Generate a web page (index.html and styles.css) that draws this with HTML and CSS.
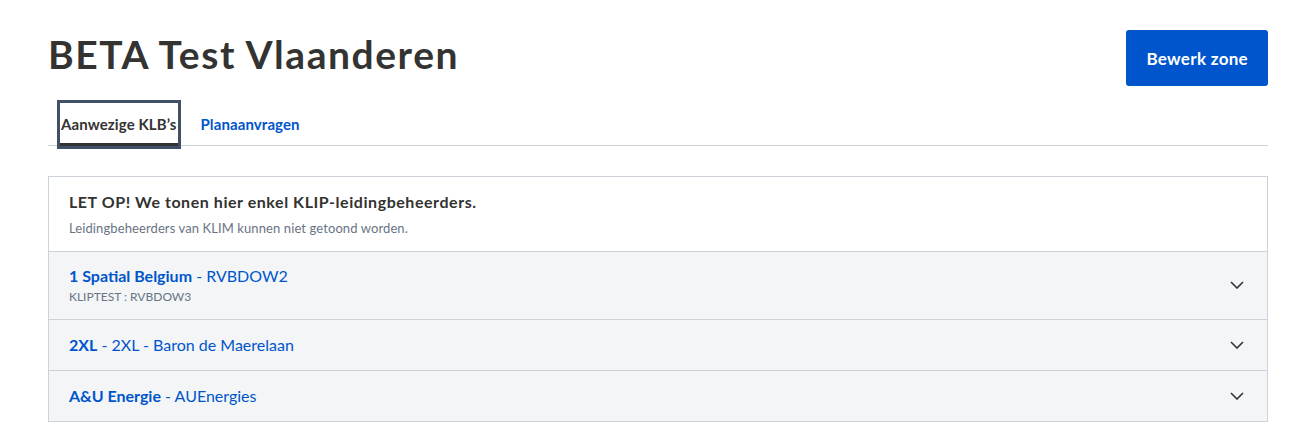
FILE: index.html
```html
<!DOCTYPE html>
<html lang="nl">
<head>
<meta charset="utf-8">
<title>BETA Test Vlaanderen</title>
<link rel="stylesheet" href="styles.css">
</head>
<body>
<div class="page">
  <header class="header">
    <h1 class="title">BETA Test Vlaanderen</h1>
    <button class="btn">Bewerk zone</button>
  </header>
  <nav class="tabs">
    <a class="tab tab-active">Aanwezige KLB’s</a>
    <a class="tab">Planaanvragen</a>
  </nav>
  <section class="card">
    <div class="notice">
      <p class="notice-title">LET OP! We tonen hier enkel KLIP-leidingbeheerders.</p>
      <p class="notice-sub">Leidingbeheerders van KLIM kunnen niet getoond worden.</p>
    </div>
    <div class="row row-multi">
      <div class="row-text">
        <div class="row-title"><strong>1 Spatial Belgium</strong> - RVBDOW2</div>
        <div class="row-sub">KLIPTEST : RVBDOW3</div>
      </div>
      <svg class="chev" width="14" height="8" viewBox="0 0 14 8"><path d="M1 1l6 6 6-6" fill="none" stroke="#333" stroke-width="1.6"/></svg>
    </div>
    <div class="row">
      <div class="row-text">
        <div class="row-title"><strong>2XL</strong> - 2XL - Baron de Maerelaan</div>
      </div>
      <svg class="chev" width="14" height="8" viewBox="0 0 14 8"><path d="M1 1l6 6 6-6" fill="none" stroke="#333" stroke-width="1.6"/></svg>
    </div>
    <div class="row">
      <div class="row-text">
        <div class="row-title"><strong>A&amp;U Energie</strong> - AUEnergies</div>
      </div>
      <svg class="chev" width="14" height="8" viewBox="0 0 14 8"><path d="M1 1l6 6 6-6" fill="none" stroke="#333" stroke-width="1.6"/></svg>
    </div>
  </section>
</div>
</body>
</html>
```
FILE: styles.css
```css
html, body {
  margin: 0;
  padding: 0;
  background: #fff;
}
body {
  font-family: "Lato", "Noto Sans", sans-serif;
  color: #333332;
}
.page {
  padding: 30px 30px 0 48px;
}
.header {
  display: flex;
  justify-content: space-between;
  align-items: flex-start;
}
.title {
  margin: 0;
  font-size: 39px;
  line-height: 48px;
  font-weight: 700;
  letter-spacing: 1.55px;
  color: #333332;
}
.btn {
  height: 56px;
  padding: 0 20px;
  background: #0055cc;
  color: #fff;
  border: none;
  border-radius: 3px;
  font-family: inherit;
  font-size: 17px;
  font-weight: 700;
  letter-spacing: 0.3px;
}
.tabs {
  display: flex;
  gap: 22px;
  margin-top: 17px;
  border-bottom: 1px solid #cbd2da;
  padding-left: 12px;
}
.tab {
  display: block;
  font-size: 15px;
  font-weight: 700;
  line-height: 18px;
  letter-spacing: 0.1px;
  padding: 12px 1px 13px;
  margin-bottom: -1px;
  color: #0055cc;
}
.tab-active {
  color: #333332;
  box-shadow: inset 0 -3px 0 #333332;
  outline: 3px solid #3f5068;
  outline-offset: 0;
}
.card {
  margin-top: 30px;
  border: 1px solid #cbd2da;
}
.notice {
  padding: 14px 20px 14px;
  background: #fff;
}
.notice-title {
  margin: 0;
  font-size: 16px;
  line-height: 22px;
  font-weight: 700;
  letter-spacing: 0.55px;
}
.notice-sub {
  margin: 7px 0 0;
  font-size: 13px;
  line-height: 17px;
  letter-spacing: 0.1px;
  color: #687483;
}
.row {
  display: flex;
  align-items: center;
  justify-content: space-between;
  background: #f3f5f6;
  border-top: 1px solid #cbd2da;
  padding: 14px 23px 14px 20px;
}
.row-multi {
  padding-top: 13px;
}
.row-title {
  font-size: 16px;
  line-height: 22px;
  color: #0055cc;
}
.row-title strong {
  font-weight: 700;
}
.row-sub {
  margin-top: 2px;
  font-size: 12px;
  line-height: 16px;
  color: #687483;
}
.chev {
  display: block;
}
```
